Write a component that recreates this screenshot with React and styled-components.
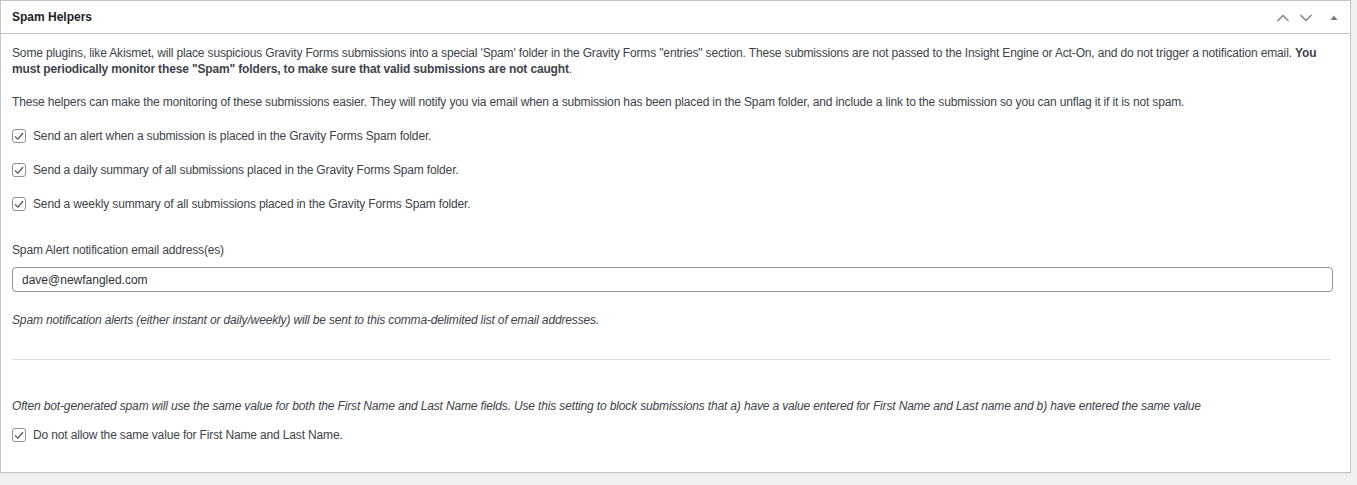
import React from 'react';
import styled, { createGlobalStyle } from 'styled-components';

const GlobalStyle = createGlobalStyle`
    html, body {
        margin: 0;
        padding: 0;
        background: #f0f0f1;
    }
    body {
        font-family: "Liberation Sans", Arial, sans-serif;
        font-size: 12px;
        color: #3c434a;
    }
`;

const Page = styled.div`
    width: 1357px;
    height: 485px;
    padding-right: 6px;
    box-sizing: border-box;
`;

const Postbox = styled.div`
    background: #fff;
    border: 1px solid #c3c4c7;
    box-shadow: 0 1px 1px rgba(0, 0, 0, 0.04);
    box-sizing: border-box;
    height: 473px;
`;

const Header = styled.div`
    display: flex;
    align-items: center;
    justify-content: space-between;
    height: 32px;
    border-bottom: 1px solid #c3c4c7;
    padding: 0 12px 0 11px;

    h2 {
        margin: 0;
        font-size: 12px;
        font-weight: 700;
        color: #1d2327;
    }
`;

const HandleActions = styled.div`
    display: flex;
    align-items: center;
    gap: 9px;
    padding-top: 1px;
`;

const Toggle = styled.svg`
    margin-left: 8px;
`;

const Inside = styled.div`
    padding: 11px 12px 0 11px;
    line-height: 16px;
    letter-spacing: -0.15px;
`;

const Para = styled.p`
    margin: ${p => p.$mt || 0}px 0 ${p => p.$mb || 0}px;
    font-style: ${p => (p.$italic ? 'italic' : 'normal')};
`;

const CheckRow = styled.label`
    display: flex;
    align-items: center;
    gap: 7px;
    height: 16px;
    margin-top: ${p => p.$mt || 18}px;
`;

const Box = styled.span`
    width: 14px;
    height: 14px;
    border: 1px solid #8c8f94;
    border-radius: 3px;
    display: inline-flex;
    align-items: center;
    justify-content: center;
    box-sizing: border-box;
    flex: none;
`;

const Label = styled.div`
    margin: 30px 0 9px;
`;

const Input = styled.div`
    height: 25px;
    border: 1px solid #8c8f94;
    border-radius: 4px;
    box-sizing: border-box;
    display: flex;
    align-items: center;
    padding: 0 9px;
    font-size: 12px;
    letter-spacing: 0;
    color: #2c3338;
    margin-right: 5px;
`;

const Rule = styled.hr`
    border: 0;
    border-top: 1px solid #dcdcde;
    margin: 31px 7px 0 0;
`;

const Check = () => (
    <Box>
        <svg width="10" height="9" viewBox="0 0 10 9">
            <path d="M1.3 4.6 L3.9 7.1 L8.7 1.5" fill="none" stroke="#50575e" strokeWidth="1.3" strokeLinecap="round" strokeLinejoin="round" />
        </svg>
    </Box>
);

const Chevron = ({ up }) => (
    <svg width="14" height="8" viewBox="0 0 14 8">
        <path d={up ? 'M1.5 7 L7 1.5 L12.5 7' : 'M1.5 1 L7 6.5 L12.5 1'} fill="none" stroke="#787c82" strokeWidth="1.3" />
    </svg>
);

export default function App() {
    return (
        <Page>
            <GlobalStyle />
            <Postbox>
                <Header>
                    <h2>Spam Helpers</h2>
                    <HandleActions>
                        <Chevron up />
                        <Chevron />
                        <Toggle width="8" height="6" viewBox="0 0 8 6">
                            <path d="M4 0.5 L7.5 5 L0.5 5 Z" fill="#787c82" />
                        </Toggle>
                    </HandleActions>
                </Header>
                <Inside>
                    <Para>
                        Some plugins, like Akismet, will place suspicious Gravity Forms submissions into a special 'Spam' folder in the Gravity Forms "entries" section. These submissions are not passed to the Insight Engine or Act-On, and do not trigger a notification email. <b>You must periodically monitor these "Spam" folders, to make sure that valid submissions are not caught</b>.
                    </Para>
                    <Para $mt={17}>
                        These helpers can make the monitoring of these submissions easier. They will notify you via email when a submission has been placed in the Spam folder, and include a link to the submission so you can unflag it if it is not spam.
                    </Para>
                    <CheckRow><Check />Send an alert when a submission is placed in the Gravity Forms Spam folder.</CheckRow>
                    <CheckRow><Check />Send a daily summary of all submissions placed in the Gravity Forms Spam folder.</CheckRow>
                    <CheckRow><Check />Send a weekly summary of all submissions placed in the Gravity Forms Spam folder.</CheckRow>
                    <Label>Spam Alert notification email address(es)</Label>
                    <Input>dave@newfangled.com</Input>
                    <Para $italic $mt={20}>
                        Spam notification alerts (either instant or daily/weekly) will be sent to this comma-delimited list of email addresses.
                    </Para>
                    <Rule />
                    <Para $italic $mt={38}>
                        Often bot-generated spam will use the same value for both the First Name and Last Name fields. Use this setting to block submissions that a) have a value entered for First Name and Last name and b) have entered the same value
                    </Para>
                    <CheckRow $mt={13}><Check />Do not allow the same value for First Name and Last Name.</CheckRow>
                </Inside>
            </Postbox>
        </Page>
    );
}
